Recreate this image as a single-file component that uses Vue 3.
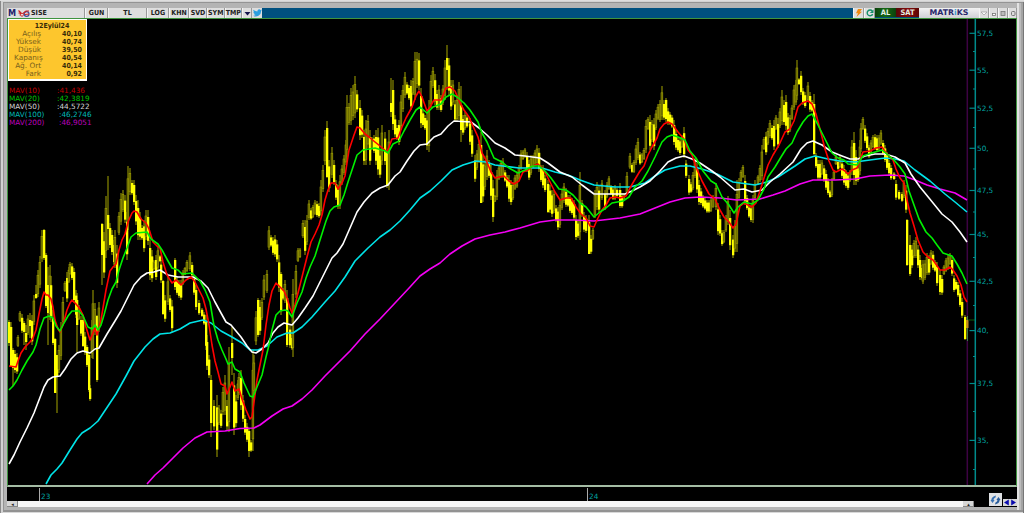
<template>
  <div class="window">
    <header class="toolbar">
      <div class="cell brand">M</div>
      <div class="cell link">
        <svg width="12" height="9" viewBox="0 0 12 9">
          <path d="M0.5 1.5 L3 4 L2 6.5 M0.5 4 L4 4.5" stroke="#c22" stroke-width="1.2" fill="none" />
          <circle cx="4" cy="5.8" r="1.4" stroke="#c33" fill="#fff" />
          <circle cx="8.6" cy="5" r="2.4" stroke="#3b4c9b" stroke-width="1.2" fill="#f3dcdc" />
          <path d="M5 4.5 L8 2 L11 2 M7 5.5 L11 5" stroke="#c22" stroke-width="1.2" fill="none" />
        </svg>
      </div>
      <div class="cell symbol">SISE</div>
      <div v-for="b in buttons" :key="b.text" class="cell" :style="{ width: b.width + 'px' }">{{ b.text }}</div>
      <div class="cell drop">
        <svg width="7" height="5" viewBox="0 0 7 5"><path d="M0.5 1 H6.5 L3.5 4.5 Z" fill="#15154d" /></svg>
      </div>
      <div class="cell bird">
        <svg width="9" height="8" viewBox="0 0 24 20">
          <path
            d="M24 2.4a10 10 0 0 1-2.8.8A5 5 0 0 0 23.3.5a10 10 0 0 1-3.1 1.2 5 5 0 0 0-8.4 4.5A14 14 0 0 1 1.7 1a5 5 0 0 0 1.5 6.6 5 5 0 0 1-2.2-.6 5 5 0 0 0 3.9 4.8 5 5 0 0 1-2.2.1 5 5 0 0 0 4.6 3.4A10 10 0 0 1 0 17.3 14 14 0 0 0 21.5 4.9 10 10 0 0 0 24 2.4z"
            fill="#2b9fe0"
          />
        </svg>
      </div>
      <div class="caption"></div>
      <div class="cell bolt">
        <svg width="8" height="8" viewBox="0 0 8 8"><path d="M3 0 H7 L5 2.7 H7 L1.5 8 L3 4.3 H1 Z" fill="#ef8a10" /></svg>
      </div>
      <div class="cell refresh">
        <svg width="8" height="8" viewBox="0 0 8 8">
          <path d="M6.3 2 A2.9 2.9 0 1 0 6.7 5.1" fill="none" stroke="#17906b" stroke-width="1.4" />
          <path d="M7.5 0.5 V4 H3.8 Z" fill="#17906b" />
        </svg>
      </div>
      <div class="trade buy">AL</div>
      <div class="trade sell">SAT</div>
      <div class="matriks">MATR<i>i</i>KS</div>
      <div class="cell win">
        <svg width="8" height="7"><path d="M1 2 H7 L4 5 Z" fill="#fff" stroke="#999" stroke-width="0.7" /></svg>
      </div>
      <div class="cell win">
        <svg width="8" height="7"><rect x="2.5" y="3.5" width="3" height="2" fill="#fff" stroke="#777" stroke-width="0.8" /></svg>
      </div>
      <div class="cell win">
        <svg width="8" height="7"><rect x="2" y="1.5" width="4" height="4" fill="#bbb" stroke="#777" stroke-width="0.8" /></svg>
      </div>
      <div class="cell win">
        <svg width="8" height="7"><rect x="2.5" y="1.5" width="3.5" height="4" rx="1" fill="#ddd" stroke="#777" /></svg>
      </div>
    </header>

    <main class="plot">
      <svg class="chart" width="1008" height="466" viewBox="8 19 1008 466">
        <line x1="967.3" y1="19" x2="967.3" y2="485" stroke="#3d0342" stroke-width="1.5" />
        <g>
          <line
            v-for="(c, i) in candles"
            :key="'w' + i"
            :x1="c.x"
            :x2="c.x"
            :y1="c.high"
            :y2="c.low"
            stroke="#969600"
            stroke-width="1.1"
          />
          <rect
            v-for="(c, i) in candles"
            :key="'b' + i"
            :x="c.x - 1"
            :y="c.top"
            :width="c.down ? 2.3 : 1.8"
            :height="c.height"
            :class="c.down ? 'down' : 'up'"
          />
        </g>
        <polyline v-for="l in lines" :key="l.color" :points="l.points" :stroke="l.color" class="average" />
        <line x1="967.5" y1="316" x2="967.5" y2="341" stroke="#3c7c4c" />
        <rect x="966" y="320" width="2.5" height="8" fill="#c08a20" />
        <line x1="968" y1="320" x2="975" y2="320" stroke="#0a5c0a" />
        <g stroke="#008b8b">
          <line x1="975.3" y1="19" x2="975.3" y2="485" stroke-width="1.5" />
          <line v-for="t in ticks" :key="t.y" x1="969.5" :x2="975" :y1="t.y" :y2="t.y" stroke-width="1.2" />
          <line v-for="y in minorTicks" :key="y" x1="973" x2="975" :y1="y" :y2="y" />
        </g>
        <text v-for="t in ticks" :key="t.text" x="977" :y="t.y + 2.8" class="price">{{ t.text }}</text>
      </svg>

      <div class="quote">
        <div class="date">12Eylül24</div>
        <div v-for="q in quote" :key="q[0]" class="row">
          <span>{{ q[0] }}</span>
          <b>{{ q[1] }}</b>
        </div>
      </div>

      <div class="legend">
        <div v-for="m in legend" :key="m.name" class="row" :style="{ color: m.color }">
          <span :style="{ width: m.width + 'px' }">{{ m.name }}</span>
          <span>:{{ m.value }}</span>
        </div>
      </div>
    </main>

    <footer class="bottom">
      <div class="left">
        <div class="years">
          <span class="first">23</span>
          <span>24</span>
        </div>
        <div class="scroll">
          <i class="arrow">◂</i>
          <div class="track"></div>
          <i class="arrow">▴</i>
        </div>
      </div>
      <div class="sync">
        <svg width="11" height="10" viewBox="0 0 11 10">
          <path d="M6 0.5 Q1.5 1.5 1.3 5 L0.5 5.2 L2.6 8 L4.6 5 H3.5 Q3.6 3.2 5.5 2.4 Z" fill="#3b73b4" />
          <path d="M5 9.5 Q9.5 8.5 9.7 5 L10.5 4.8 L8.4 2 L6.4 5 H7.5 Q7.4 6.8 5.5 7.6 Z" fill="#2a5d9c" />
        </svg>
      </div>
      <div class="nav">
        <svg width="14" height="7" viewBox="0 0 14 7">
          <path d="M5.8 0.6 V6.4 L1 3.5 Z M8.2 0.6 V6.4 L13 3.5 Z" fill="#0a0aae" />
        </svg>
      </div>
    </footer>
  </div>
</template>

<script setup>
const buttons = [
  { text: 'GUN', width: 23 },
  { text: 'TL', width: 39 },
  { text: 'LOG', width: 22 },
  { text: 'KHN', width: 20 },
  { text: 'SVD', width: 18 },
  { text: 'SYM', width: 17.5 },
  { text: 'TMP', width: 17.5 }
];

const quote = [
  ['Açılış', '40,10'],
  ['Yüksek', '40,74'],
  ['Düşük', '39,50'],
  ['Kapanış', '40,54'],
  ['Ağ. Ort', '40,14'],
  ['Fark', '0,92']
];

const legend = [
  { name: 'MAV(10)', value: '41,436', color: '#c00000', width: 48 },
  { name: 'MAV(20)', value: '42,3819', color: '#00c400', width: 48 },
  { name: 'MAV(50)', value: '44,5722', color: '#d4d4d4', width: 48 },
  { name: 'MAV(100)', value: '46,2746', color: '#00b8b8', width: 50 },
  { name: 'MAV(200)', value: '46,9051', color: '#bc00bc', width: 50 }
];

const ticks = [
  { text: '57,5', y: 33.3 },
  { text: '55,', y: 70.2 },
  { text: '52,5', y: 108.2 },
  { text: '50,', y: 148.3 },
  { text: '47,5', y: 190.5 },
  { text: '45,', y: 234.5 },
  { text: '42,5', y: 281.3 },
  { text: '40,', y: 330.6 },
  { text: '37,5', y: 383.5 },
  { text: '35,', y: 440.4 }
];
const minorTicks = [51.5, 89, 127.5, 169, 212, 257.5, 305.5, 356.5, 411.5, 469.5];

const lines = [
  {
    color: '#f400f4',
    points:
      '147,484 155,475 163,468 173,458 183,448 195,438 207,432 225,431 240,428.5 254,428 260,425 272,416 283,409 292,406 302,399 312,390 325,376 335,366 350,351 365,334 380,319 395,303 410,287 420,276 430,269 440,263 450,254 462,246 475,239 490,235 505,232 520,228 540,222 555,220 575,220 594,221 620,218 640,214 655,208 670,202 685,198 700,197 720,198 737,200 760,199 773,195 785,191 800,184 813,180 835,180 855,179 870,176 890,175 904,176 915,180 927,185 940,189 955,193 967,200'
  },
  {
    color: '#00e4e8',
    points:
      '46,484 51,475 57,469 62,463 70,450 77,439 82,433 90,428 98,421 106,409 116,394 126,376 134,361 145,347 153,339 160,334 170,333 180,329 190,323 203,320 211,323 221,331 232,337 242,343 250,350 258,350 267,346 277,337 287,333 293,333 302,327 312,317 325,302 335,291 345,277 355,261 368,248 380,237 390,230 400,221 410,210 420,198 430,191 441,181 452,170 463,165 476,161 486,162 495,165 519,168 542,168 555,172 568,175 580,180 594,185 615,187 630,187 645,183 655,176 665,170 680,166 690,166 702,169 717,174 733,182 755,185 767,182 778,177 795,166 805,159 815,156 828,159 840,161 855,162 870,160 885,158 895,159 904,161 915,170 930,181 945,194 955,202 967,212'
  },
  {
    color: '#ffffff',
    points:
      '9,464 14,455 20,442 27,428 34,413 39,400 44,387 48,380 53,377 60,376 65,369 71,359 77,353 83,351 90,353 95,349 99,348 107,334 115,321 121,311 127,299 134,285 141,277 147,273 154,272 160,270 168,275 178,277 193,277 201,281 208,288 215,302 221,313 226,322 231,325 236,331 241,337 247,346 252,352 256,353 262,349 268,343 273,333 278,327 284,323 292,325 298,318 305,308 313,296 320,282 326,270 332,258 337,253 343,244 350,228 357,212 364,202 372,193 380,188 388,185 395,176 400,172 407,161 414,151 420,145 427,144 434,137 441,134 448,126 454,121 471,122 479,128 487,135 495,143 505,148 515,155 525,156 540,158 548,163 560,172 572,177 582,185 594,194 625,194 632,191 640,187 650,181 660,171 668,162 676,158 684,156 692,159 700,163 712,171 720,177 728,184 735,190 744,189 752,192 762,190 770,182 780,174 793,162 801,149 807,143 813,141 822,145 832,152 842,156 850,159 858,159 865,156 875,154 885,154 895,157 905,163 911,174 920,187 929,198 942,214 952,222 960,232 967,242'
  },
  {
    color: '#ff0000',
    points:
      '9,366 16,367 18,361 21,353 25,347 30,342 33,338 36,330 39,314 42,299 44,292 46,295 48,295 51,299 53,307 55,320 58,329 60,332 63,325 67,310 70,303 72,300 76,304 80,309 83,315 86,327 90,340 93,333 95,328 97,335 99,328 101,320 103,308 106,290 110,271 113,267 116,264 119,250 122,240 125,234 128,222 132,213 134,211 137,212 141,219 146,223 149,229 153,242 157,246 160,248 163,262 167,275 172,283 176,280 181,285 186,280 191,277 195,282 199,290 203,298 206,309 209,325 212,345 215,361 218,372 221,384 225,386 227,394 230,387 232,382 235,391 239,389 242,399 246,410 250,419 252,417 255,395 257,380 260,365 263,350 266,325 269,305 272,291 276,283 280,287 284,291 287,298 290,308 292,313 295,305 299,289 303,273 307,257 311,242 315,234 319,225 322,215 325,200 328,190 331,183 335,183 338,189 342,183 345,176 349,150 354,135 357,127 360,128 365,134 369,137 375,142 380,146 387,152 392,139 398,138 402,127 406,118 412,107 416,96 419,91 422,97 427,111 430,107 434,100 441,100 446,88 450,87 455,91 460,103 464,110 469,117 473,126 478,137 482,153 486,160 491,172 495,178 499,177 504,176 509,181 514,184 519,181 523,172 528,170 533,166 538,164 542,168 546,174 551,184 555,192 560,200 566,198 571,198 576,207 581,214 586,218 590,226 594,227 597,220 602,210 606,205 610,198 615,197 620,198 626,196 630,188 634,181 640,171 644,166 648,155 652,147 657,138 660,129 664,124 668,122 672,124 678,132 684,139 688,150 692,155 696,167 702,181 709,194 715,199 720,210 724,217 729,222 733,228 736,224 740,206 744,203 748,205 752,207 756,203 760,191 764,178 768,165 773,155 779,145 785,132 790,129 794,121 798,107 802,103 808,101 812,104 816,114 821,133 825,149 829,161 833,170 836,172 842,169 845,171 848,174 852,170 857,168 860,160 863,152 870,151 876,148 882,147 886,153 893,160 896,169 900,178 904,183 907,200 910,213 914,226 918,240 923,252 928,257 933,260 940,270 945,270 950,267 953,270 957,276 961,285 964,297 967,302'
  },
  {
    color: '#00f000',
    points:
      '9,390 13,386 17,380 22,370 27,361 33,352 36,345 40,329 44,318 49,316 53,318 56,326 60,331 64,323 68,316 72,311 79,311 83,316 88,327 92,329 95,325 98,330 101,325 104,315 108,300 112,289 116,282 119,270 123,258 127,248 131,237 136,233 147,232 151,239 158,244 162,250 168,261 172,268 178,270 182,274 192,273 200,281 205,290 210,302 214,326 218,340 222,350 226,359 228,364 232,362 235,369 240,372 244,383 250,396 253,397 257,387 262,375 266,357 269,345 272,330 276,315 280,311 285,310 288,311 292,317 297,303 302,292 306,278 310,267 315,256 320,240 326,221 330,211 334,207 340,205 344,195 348,182 352,170 357,155 363,150 375,148 385,151 388,153 393,144 399,141 404,131 410,120 416,110 420,107 427,113 433,107 441,104 446,97 452,94 457,97 464,103 470,110 478,122 482,133 487,142 494,158 502,162 509,168 518,173 525,170 533,166 539,166 545,171 551,178 559,189 566,190 573,195 580,203 586,207 594,217 600,212 606,208 612,203 623,201 629,197 635,187 642,181 648,171 655,157 662,142 667,137 672,135 678,137 685,140 690,151 696,158 703,171 711,181 716,184 722,197 729,205 734,213 738,207 744,202 752,204 758,200 764,189 768,177 775,167 781,157 786,149 792,143 797,132 803,122 808,116 812,114 817,123 822,133 827,143 832,153 838,158 844,160 848,164 857,165 863,156 872,153 882,150 888,155 894,160 900,167 905,174 909,191 914,205 919,219 926,232 932,238 937,245 943,253 952,256 957,264 962,273 967,284'
  }
];

// x, high, low and optionally the top and bottom of the body
const bars = `
9 320 346 322 343|11 322 367 327 367|13 348 386 350 368|15 350 373 354 370|17 353 374|18 335 347|20 311 322|22 314 333|24 321 345 323 332|26 325 350 333 342
28 315 335|30 313 338 320 326|32 315 345|34 295 325|36 285 299 294 298|38 270 297|40 256 288|42 230 262|44 229 260 230 258|46 253 308 255 306
48 267 345 285 313|50 265 320|51 276 322|53 310 345 318 343|55 338 393 339 393|57 355 413 355 376|59 345 373|61 322 360|63 297 325|65 281 292|67 272 302|69 267 283|70 262 275|72 263 280
74 268 303 272 300|76 290 318|77 293 352 300 325|79 305 320|81 316 336|83 317 347 320 346|85 332 355|87 345 367 347 365|89 353 392 355 390|90 385 401|92 320 358|93 290 359|95 303 335|97 315 382 316 380|99 302 332
102 223 285 224 255|104 232 278|106 196 258|108 176 250 215 229|110 223 248|112 230 255|114 240 265|115 230 268|117 245 288|119 212 235|121 193 225|123 190 212|125 195 223|127 212 260|128 166 230|130 168 195|132 180 195|134 180 205
136 195 225|138 200 240|140 212 240|142 225 240|144 220 252|146 210 240|148 210 245|150 240 280|152 250 282|154 260 270|156 255 280|158 246 270|160 255 262|161 260 283|163 280 315 281 314|165 295 322|168 276 305
170 295 312|172 300 332|175 258 290 260 287|177 277 295|179 280 298|181 280 300|183 270 285|185 267 275|187 260 272|190 252 271|192 262 277|194 275 295|196 285 310|199 300 315|202 308 317|204 312 325|206 315 350|207 335 370|209 355 378|211 375 437 380 423
214 400 430|217 395 457|219 405 425|221 410 428|223 387 415|225 375 415|227 400 430|229 347 432|232 327 375 343 358|234 373 435|236 395 427|238 380 400|239 373 395|241 370 410|243 395 422|245 415 435|247 423 442|249 428 457 431 451|251 440 452|253 350 451
254 355 395|256 311 345|258 298 337 300 335|260 300 335|262 298 320|264 275 300|267 270 293|269 226 250|271 235 247|273 237 255|275 235 257|277 240 262|279 255 292|281 272 315 274 310|283 288 300|285 280 303|287 290 347 298 345|290 325 348|292 335 350|293 279 357
296 265 298|298 248 262|300 248 258|303 220 238|305 220 255|307 215 245|309 200 220|311 208 220|313 205 218|315 200 215|317 201 217|319 203 218|321 180 215|323 165 192|325 130 165|327 121 178 128 177|329 160 192|332 147 178|334 160 185|336 180 200|338 185 209|340 175 209|342 165 185|344 155 175|346 140 165
347 95 157|349 103 125|351 88 125|353 85 120|355 76 118|357 90 112|360 100 140|362 110 138|364 130 165|366 120 165|368 115 148|370 130 165|372 137 150|374 135 153|376 130 165|378 128 175|380 150 178|382 125 165|385 132 165|387 150 188 152 186|389 130 190|391 78 117 103 112
393 80 130|395 115 137|397 125 140|399 120 145|401 95 130|403 85 112|405 72 98|407 82 95|409 85 100|411 80 110|413 78 95|415 52 100|417 52 88|419 53 90|421 88 128|423 110 127|425 115 130|427 113 150|429 100 152|431 75 108|433 67 88|435 74 105|437 90 110|439 85 110|441 95 112|443 85 105|445 60 100|447 45 90 58 70
449 58 95|451 80 110|453 80 105|455 100 122|457 95 122|459 82 120|461 86 142 105 130|463 115 135|465 112 130|467 115 128|470 118 145|472 130 157|475 155 182|477 150 170|479 140 163|481 132 203 145 203|483 155 202|485 160 190|487 150 180|489 160 178|491 165 200|493 180 222|495 195 202|497 170 200|499 165 180|501 160 178
503 158 178|505 170 182|507 175 188|509 175 202|511 180 205|513 182 200|515 175 190|517 172 188|519 165 180|521 150 170|523 150 160|525 148 158|527 152 172|529 160 180|531 155 175|533 155 168|535 150 165|537 145 165|539 148 172|541 165 182|543 165 188|545 175 192|548 180 213 184 212|550 185 213|552 190 217|554 190 213|556 205 222|558 207 230|560 200 228|562 190 210|564 183 203|566 188 207
568 195 207|570 195 213|572 198 215|574 200 220|576 215 240|578 220 238|580 172 240|582 200 217|584 212 232|586 215 233|589 215 254 222 254|591 235 254|593 228 240|595 190 218|597 182 210|599 185 213|602 180 200|605 190 210|607 182 198|609 176 190|611 185 195|613 187 200|615 185 200|617 188 197|620 183 208 190 206|622 193 208|624 193 200|627 172 195
630 153 169|632 163 173|634 160 173|636 145 165|638 138 160|640 152 165|642 153 163|644 148 160|646 120 153|648 117 130|650 115 150|652 120 142|654 118 150|656 110 130|658 104 120|660 100 122|662 86 120|664 100 120|666 98 122 100 119|668 108 125|670 112 125|672 115 128|674 120 145|676 130 150|678 137 152|680 138 155|682 135 148|684 127 158
686 160 178|689 175 195|691 182 193|693 172 190|695 158 178|697 163 193|699 180 205|701 188 205|703 195 208|705 198 210|707 200 213|709 200 213|711 198 212|713 195 208|716 183 210|718 203 235|720 215 236|722 230 246|724 230 243|726 215 232|728 196 225|730 210 250|733 235 258|735 220 252|737 180 252|739 178 200|741 170 182|743 165 178|745 175 205|747 195 210|749 205 218|751 205 222|753 195 223
755 180 200|758 175 185|760 165 182|762 145 180|764 137 150|766 132 155|768 128 145|770 120 138|772 125 140|774 120 150|776 115 130|778 118 148|780 108 128|782 90 125|784 100 125|786 95 130|788 113 135|790 115 132|792 105 120|794 85 110|796 80 105|797 60 100|799 78 85|801 71 95|803 88 105|805 92 108|808 82 102|810 92 112|812 100 112|814 94 155 104 154
816 153 168|818 160 180|820 160 180|822 160 175|824 165 182|826 170 190|828 178 195|830 190 198|832 178 197|834 170 180|836 155 165|838 160 170|840 155 168|842 160 178|844 165 185|846 170 188|848 172 190|850 170 182|852 140 175|854 132 185 143 175|856 150 185|858 165 182|860 140 175|861 123 152|863 117 130|865 125 143|867 133 150|869 145 158|871 140 155|873 135 148|875 134 150|877 135 152|879 135 150|881 130 145
883 140 155|885 145 162|887 152 170|889 160 175|891 165 180|894 172 180|896 180 200|899 190 200|902 192 202|904 180 198|906 185 213|907 219 266 220 265|910 235 276 245 274|912 245 268|914 240 258|916 237 258|918 245 268|920 255 280|922 265 280|923 260 284|925 260 280|927 253 275|929 255 275|931 250 265|933 251 270|935 260 272|937 262 286|940 270 295|942 275 295|944 265 275|946 258 272|948 255 270|950 253 265|952 256 276
954 275 292|956 280 290|958 282 297|960 290 307|962 298 318|965 315 340 317 339`;

let previous = 0;
const candles = bars
  .trim()
  .split(/[|\n]/)
  .map((bar) => {
    const [x, high, low, bodyTop, bodyBottom] = bar.split(' ').map(Number);
    const range = low - high;
    const top = bodyTop || high + range * 0.2;
    const bottom = bodyBottom || low - range * 0.12;
    const middle = (high + low) / 2;
    const down = Boolean(bodyTop) || middle >= previous;
    previous = middle;
    return { x, high, low, top, height: bottom - top, down };
  });
</script>

<style>
body {
  margin: 0;
  background: #b4b4b4;
}
</style>

<style scoped>
.window {
  display: flex;
  flex-direction: column;
  box-sizing: border-box;
  width: 1024px;
  height: 513px;
  padding: 8px 6px 6px 7px;
  overflow: hidden;
  background: #b4b4b4;
  box-shadow: inset 0 1px #dedede, inset 1px 0 #8a8a8a, inset 3px 2px #d2d2d2, inset -1px 0 #777,
    inset 0 -1px #d8d8d8, inset 0 -3px #929292, inset 4px 3px #949494, inset -3px 0 #a4a4a4, inset -5px 0 #bcbcbc,
    inset -7px 0 #e2e2e2;
  font-family: 'DejaVu Sans', sans-serif;
}

.toolbar {
  display: flex;
  height: 10px;
  width: 1010px;
  background: #00507f;
}

.cell {
  display: flex;
  flex: none;
  align-items: center;
  justify-content: center;
  box-sizing: border-box;
  height: 10px;
  border-right: 1px solid #999;
  border-left: 1px solid #f4f4f4;
  background: #dedede;
  color: #222;
  font-family: 'DejaVu Sans Condensed', 'DejaVu Sans', sans-serif;
  font-size: 7px;
  font-weight: bold;
  line-height: 10px;
}

.brand {
  width: 10px;
  border: 0;
  color: #22226c;
  font-size: 9px;
}

.link {
  width: 13px;
  border: 0;
}

.symbol {
  width: 55px;
  justify-content: flex-start;
  border-left: 0;
  padding-left: 1px;
}

.drop {
  width: 10px;
}

.bird {
  width: 10px;
  border: 0;
}

.caption {
  flex: 1;
}

.bolt,
.refresh {
  width: 11px;
}

.trade {
  width: 21px;
  height: 9px;
  background: linear-gradient(90deg, #0b430b, #156915, #0b430b);
  color: #e4eee4;
  font-family: 'DejaVu Sans Condensed', 'DejaVu Sans', sans-serif;
  font-size: 7.5px;
  font-weight: bold;
  line-height: 10px;
  text-align: center;
}

.sell {
  width: 23px;
  background: linear-gradient(90deg, #540808, #850b0b, #5c0505);
}

.matriks {
  width: 60px;
  height: 10px;
  background: linear-gradient(#f2f2f2, #d0d0d6);
  color: #28286c;
  font-size: 7.8px;
  font-weight: bold;
  line-height: 10px;
  text-align: center;
}

.matriks i {
  color: #3f9fd0;
  font-style: normal;
}

.win {
  width: 9.5px;
}

.plot {
  position: relative;
  flex: none;
  box-sizing: border-box;
  width: 1010px;
  height: 469px;
  border: 1px solid #3f943f;
  border-bottom: 2px solid #a4bca4;
  background: #000;
}

.chart {
  display: block;
}

.down {
  fill: #ffff00;
}

.up {
  fill: #5c5c00;
  stroke: #a0a000;
  stroke-width: 0.6;
}

.average {
  fill: none;
  stroke-width: 1.6;
  stroke-linejoin: round;
}

.price {
  fill: #00a4a4;
  font-size: 7.3px;
}

/* floating data box over the chart */
.quote {
  position: absolute;
  top: 0;
  left: 0;
  box-sizing: border-box;
  width: 79px;
  height: 62px;
  padding: 2px 4px 0 5px;
  border: 1px solid #fff;
  border-width: 1px 1px 2px;
  background: #fdc62d;
  color: #79611c;
  font-size: 7.3px;
  line-height: 8px;
}

.date,
.quote b {
  color: #352a08;
  font-family: 'DejaVu Sans Condensed', 'DejaVu Sans', sans-serif;
  font-size: 7px;
  font-weight: bold;
}

.date {
  padding-left: 8px;
  text-align: center;
}

.quote .row {
  display: flex;
  justify-content: space-between;
}

.quote .row span {
  width: 27px;
  text-align: right;
  white-space: nowrap;
  direction: rtl;
  unicode-bidi: plaintext;
}

.legend {
  position: absolute;
  top: 68px;
  left: 1px;
  font-size: 7.3px;
  line-height: 8px;
}

.legend .row {
  display: flex;
}

.bottom {
  display: flex;
  flex: none;
  align-items: flex-end;
  height: 20px;
  width: 1010px;
  background: #000;
}

.left {
  width: 967px;
}

.years {
  display: flex;
  height: 13px;
  color: #00a0a0;
  font-size: 7.3px;
  line-height: 17px;
}

.years span {
  border-left: 1px solid #aaa;
  padding-left: 1px;
}

.years .first {
  width: 546px;
  margin-left: 32px;
}

.scroll {
  display: flex;
  height: 6px;
}

.track {
  flex: 1;
  background: #f6f6f6;
}

.arrow {
  width: 11px;
  background: #d6d6d6;
  box-shadow: inset -1px -1px #888;
  color: #222;
  font-size: 5px;
  font-style: normal;
  line-height: 6px;
  text-align: center;
}

.sync {
  display: flex;
  align-items: center;
  justify-content: center;
  width: 13px;
  height: 13px;
  margin: 0 1px 1px 15px;
  background: #dfe1e4;
}

.nav {
  display: flex;
  width: 14px;
  height: 7px;
  margin-bottom: 1px;
  background: #d6d6d6;
}
</style>
